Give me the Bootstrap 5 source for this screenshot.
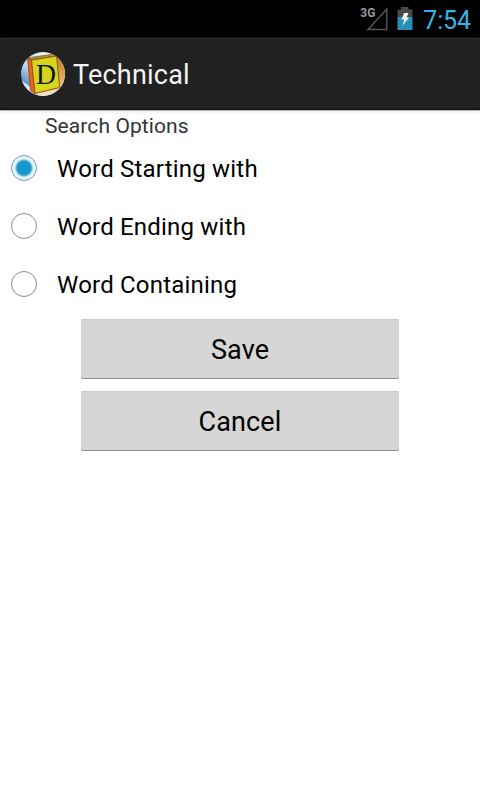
<!DOCTYPE html>
<html lang="en">
<head>
<meta charset="utf-8">
<meta name="viewport" content="width=device-width, initial-scale=1">
<title>Technical</title>
<link href="https://cdn.jsdelivr.net/npm/bootstrap@5.3.0/dist/css/bootstrap.min.css" rel="stylesheet">
<style>
body{font-family:Roboto,"Liberation Sans",sans-serif;background:#fff;color:#000;min-height:100vh}
.status-bar{height:38px;background:#000;padding-right:9px}
.clock{font-size:25px;line-height:38px;color:#33b5e5;letter-spacing:-.1px;margin-left:10px;padding-top:3px}
.signal{margin-right:9px}
.action-bar{height:72px;background:#212121;border-top:1px solid #2c2c2c;border-bottom:2px solid #171717;padding:0 21px;box-shadow:0 1px 0 #b5b1b2,0 2px 3px #eee4e7}
.app-title{font-size:27px;line-height:36px;color:#f3f3f3;margin-left:8px;letter-spacing:.2px;padding-top:2px}
.group-label{height:29px;font-size:21px;line-height:33px;color:#333;padding-left:45px;letter-spacing:.1px}
.option{height:58px;padding-left:11px}
.option .form-check-input{width:26px;height:26px;margin:0;border:1.5px solid #8c8c8c;background-color:#fff;flex:none}
.option .form-check-input:checked{border-color:#8e9bad;background:radial-gradient(circle,#1a94c8 0,#149acf 6.2px,#4c9fc4 7.4px,#9fd5ea 8.4px,#e0f5fc 9.4px,#e0f5fc 100%)}
.option .form-check-label{font-size:24px;line-height:32px;margin-left:20px;letter-spacing:.2px;padding-top:2px}
.actions{width:318px;gap:12px;padding-top:6px}
.actions .btn{height:60px;padding:2px 0 0;border:0;border-radius:2px;background:#d6d6d6;box-shadow:inset 0 1px #cdcdcd,inset 0 -1px #8c8c8c;color:#000;font-size:27px;line-height:36px;letter-spacing:.1px}
</style>
<script src="https://cdn.jsdelivr.net/npm/bootstrap@5.3.0/dist/js/bootstrap.bundle.min.js"></script>
</head>
<body>
<div class="status-bar d-flex align-items-center justify-content-end">
  <svg class="signal" width="28" height="26" viewBox="360 6 28 26" aria-label="3G signal">
    <text x="360.3" y="17" font-family="Roboto" font-weight="700" font-size="13" textLength="15" lengthAdjust="spacingAndGlyphs" fill="#999">3G</text>
    <path d="M368 29.500 386.800 9V29.500Z" fill="none" stroke="#555" stroke-width="1.400"/>
  </svg>
  <svg width="16" height="26" viewBox="397 6 16 26" aria-label="Battery charging">
    <path d="M397.500 9.500H401V7H408.500V9.500H412.500V17H397.500Z" fill="#484848"/>
    <path d="M397.500 17H412.500V30H397.500Z" fill="#278fb5"/>
    <path d="M404 13H408.500L406.500 17.500H409L402.300 26 404.500 19.500H401.700Z" fill="#f5f5f5"/>
  </svg>
  <span class="clock">7:54</span>
</div>
<header class="action-bar d-flex align-items-center">
  <svg width="44" height="44" viewBox="0 0 44 44" aria-hidden="true">
    <defs>
      <clipPath id="disc"><circle cx="22" cy="22" r="22"/></clipPath>
      <linearGradient id="sky" x1="0" y1=".8" x2=".6" y2="0"><stop offset="0" stop-color="#3976b4"/><stop offset=".45" stop-color="#b9d7ed"/><stop offset="1" stop-color="#f8f8ef"/></linearGradient>
      <linearGradient id="sand" x1="0" y1="0" x2="0" y2="1"><stop offset="0" stop-color="#b48024"/><stop offset=".5" stop-color="#d6a653"/><stop offset="1" stop-color="#f5ead2"/></linearGradient>
    </defs>
    <g clip-path="url(#disc)">
      <path d="M0 0H44V44H0Z" fill="url(#sky)"/>
      <path d="M34 4 44 10V44H14L20 36Z" fill="url(#sand)"/>
      <path d="M0 28 11 36 17 44H0Z" fill="#d9e7f3"/>
      <path d="M6.500 6 32 2 35.500 4 10.500 8Z" fill="#a9953a" stroke="#573b18" stroke-width=".5"/>
      <path d="M6.500 6 10.500 8 14 41.500 9.500 38.500Z" fill="#e5671b" stroke="#83370f" stroke-width=".7"/>
      <path d="M10.500 8 35.500 4 38.700 35.500 14 41.500Z" fill="#d3d61b" stroke="#a34b17" stroke-width="1"/>
      <text x="15" y="31.500" font-family="Liberation Serif" font-size="29" textLength="20" lengthAdjust="spacingAndGlyphs" fill="#111">D</text>
    </g>
  </svg>
  <h1 class="app-title mb-0 fw-normal">Technical</h1>
</header>
<main>
  <div class="group-label" id="options-label">Search Options</div>
  <div role="radiogroup" aria-labelledby="options-label">
    <div class="option d-flex align-items-center">
      <input class="form-check-input" type="radio" name="match" id="starting" checked>
      <label class="form-check-label" for="starting">Word Starting with</label>
    </div>
    <div class="option d-flex align-items-center">
      <input class="form-check-input" type="radio" name="match" id="ending">
      <label class="form-check-label" for="ending">Word Ending with</label>
    </div>
    <div class="option d-flex align-items-center">
      <input class="form-check-input" type="radio" name="match" id="containing">
      <label class="form-check-label" for="containing">Word Containing</label>
    </div>
  </div>
  <div class="actions d-flex flex-column mx-auto">
    <button class="btn" type="button">Save</button>
    <button class="btn" type="button">Cancel</button>
  </div>
</main>
</body>
</html>
